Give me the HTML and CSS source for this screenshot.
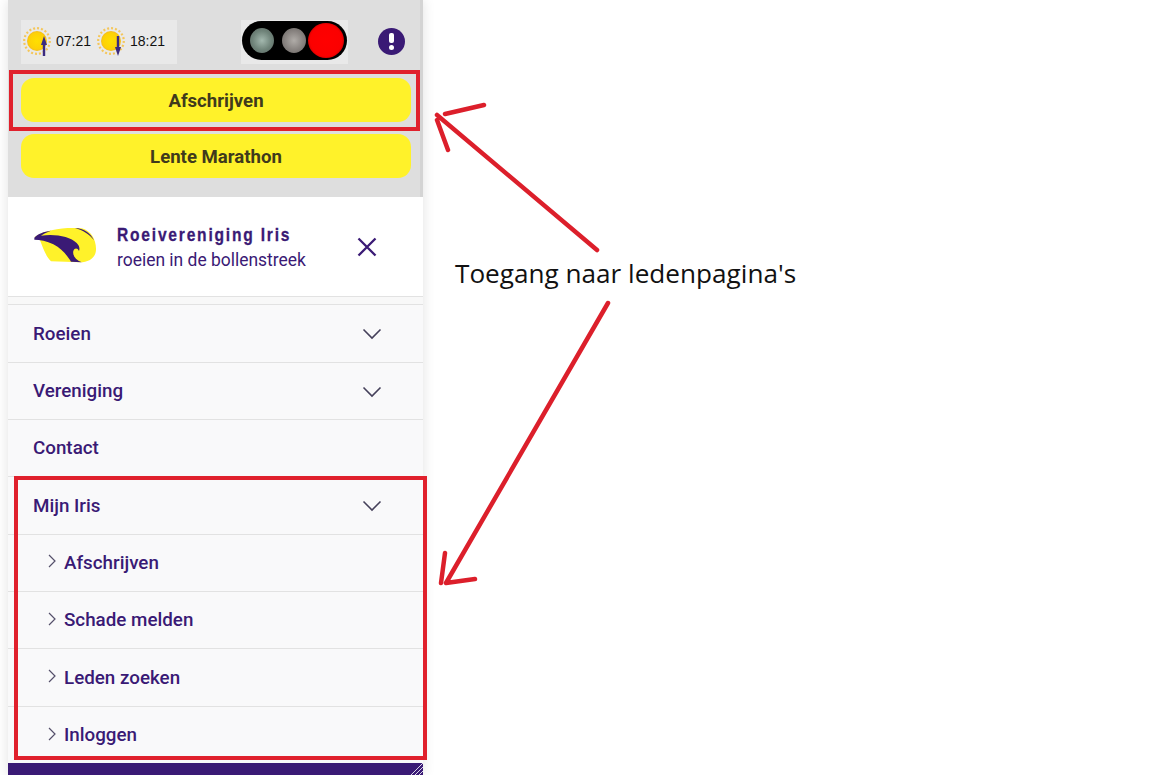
FILE: index.html
```html
<!DOCTYPE html>
<html>

<head>
    <title>Roeivereniging Iris</title>
    <link rel="stylesheet" href="styles.css">
</head>

<body>
    <svg class="defs" width="0" height="0">
        <defs>
            <radialGradient id="sun-fill">
                <stop offset="0" stop-color="#ffdf00" />
                <stop offset="0.8" stop-color="#fdd106" />
                <stop offset="1" stop-color="#f3bb20" />
            </radialGradient>
            <symbol id="sun" viewBox="0 0 28 28">
                <circle cx="14" cy="14" r="12.8" fill="none" stroke="#f4c65a" stroke-width="2.2" stroke-dasharray="2 2" />
                <circle cx="14" cy="14" r="10" fill="url(#sun-fill)" />
            </symbol>
            <symbol id="chevron-down" viewBox="0 0 20 12">
                <path d="M1.5 1.5 10 10 18.5 1.5" fill="none" stroke="#45405a" stroke-width="1.6" />
            </symbol>
            <symbol id="chevron-right" viewBox="0 0 8 14">
                <path d="M1 1 7 7 1 13" fill="none" stroke="#55506a" stroke-width="1.2" />
            </symbol>
        </defs>
    </svg>

    <div class="panel">
        <div class="top-block">
            <div class="status-row">
                <div class="sun-times">
                    <span class="sun-icon">
                        <svg class="sun-svg"><use href="#sun" /></svg>
                        <svg class="sun-arrow" viewBox="0 0 6 20"><path d="M3 0 6 9H4.2V20H1.8V9H0Z" fill="#3b2a80" /></svg>
                    </span>
                    <span class="time">07:21</span>
                    <span class="sun-icon">
                        <svg class="sun-svg"><use href="#sun" /></svg>
                        <svg class="sun-arrow" viewBox="0 0 6 20"><path d="M3 20 6 11H4.2V0H1.8V11H0Z" fill="#3b2a80" /></svg>
                    </span>
                    <span class="time">18:21</span>
                </div>
                <div class="light-box">
                    <div class="traffic-light">
                        <span class="lamp lamp-green"></span>
                        <span class="lamp lamp-grey"></span>
                        <span class="lamp lamp-red"></span>
                    </div>
                </div>
                <div class="alert-icon">
                    <span class="alert-bar"></span>
                    <span class="alert-dot"></span>
                </div>
            </div>
            <a class="yellow-button">Afschrijven</a>
            <a class="yellow-button">Lente Marathon</a>
        </div>

        <div class="brand">
            <svg class="logo" viewBox="0 0 255 165">
                <path d="M28 55C60 30 125 24 170 28C197 34 214 62 213 92C212 116 192 130 165 130L78 127C64 114 55 90 45 64Z" fill="#fff22a" />
                <path d="M150 27C175 27 197 42 207 64C192 45 175 34 150 27Z" fill="#3a1a75" />
                <path d="M28 56C40 44 55 38 78 35C62 41 53 46 48 50C90 44 135 52 155 72C163 80 165 88 162 96C158 86 148 86 145 96C142 110 152 122 170 130L138 128C128 112 112 90 85 76C65 66 45 62 28 62Z" fill="#3a1a75" />
            </svg>
            <div class="brand-text">
                <div class="brand-name">Roeivereniging Iris</div>
                <div class="brand-sub">roeien in de bollenstreek</div>
            </div>
            <svg class="close-icon" viewBox="0 0 20 20">
                <path d="M1.5 1.5 18.5 18.5M18.5 1.5 1.5 18.5" fill="none" stroke="#3a1a75" stroke-width="2.3" />
            </svg>
        </div>

        <div class="brand-gap"></div>

        <ul class="menu">
            <li class="menu-item">Roeien <svg class="chevron"><use href="#chevron-down" /></svg></li>
            <li class="menu-item">Vereniging <svg class="chevron"><use href="#chevron-down" /></svg></li>
            <li class="menu-item">Contact</li>
            <li class="menu-item">Mijn Iris <svg class="chevron"><use href="#chevron-down" /></svg></li>
            <li class="menu-item sub-item"><svg class="sub-chevron"><use href="#chevron-right" /></svg>Afschrijven</li>
            <li class="menu-item sub-item"><svg class="sub-chevron"><use href="#chevron-right" /></svg>Schade melden</li>
            <li class="menu-item sub-item"><svg class="sub-chevron"><use href="#chevron-right" /></svg>Leden zoeken</li>
            <li class="menu-item sub-item"><svg class="sub-chevron"><use href="#chevron-right" /></svg>Inloggen</li>
        </ul>

        <div class="panel-footer">
            <svg class="resize-lines" viewBox="0 0 14 12">
                <path d="M2 12 14 0M6 12 14 4M10 12 14 8" fill="none" stroke="#d8d4e8" stroke-width="1" />
            </svg>
        </div>
    </div>

    <!-- red markup drawn on top of the screenshot -->
    <div class="mark mark-top"></div>
    <div class="mark mark-bottom"></div>
    <svg class="arrows" viewBox="0 0 1152 775">
        <path d="M597 250 437 115M445 114 484 105M437 120 448 150" />
        <path d="M608 303 446 583M446 583 475 579M441 583 445 553" />
    </svg>
    <div class="note">Toegang naar ledenpagina's</div>
</body>

</html>
```

FILE: styles.css
```css
html,
body {
    height: 775px;
    overflow: hidden;
}

body {
    font-family: Roboto, sans-serif;
    margin: 0;
    padding: 0;
    background-color: #fff;
    color: #3a1a75;
}

.defs {
    position: absolute;
}

.panel {
    width: 415px;
    height: 775px;
    margin-left: 8px;
    display: flex;
    flex-direction: column;
    background-color: #f9f9fa;
    box-shadow: 0 0 12px rgba(0, 0, 0, 0.12);
}

.top-block {
    flex: none;
    height: 197px;
    box-sizing: border-box;
    padding: 20px 12px 0 13px;
    background-color: #dedede;
    border-right: 3px solid #d4d4d4;
}

.status-row {
    height: 44px;
    margin-bottom: 14px;
    display: flex;
    align-items: flex-start;
}

.sun-times {
    width: 156px;
    height: 44px;
    padding-left: 2px;
    box-sizing: border-box;
    display: flex;
    align-items: center;
    background-color: #e9e9e9;
    font-family: "Liberation Sans", sans-serif;
    font-size: 14px;
    color: #111;
}

.sun-icon {
    position: relative;
    width: 28px;
    height: 28px;
    margin-top: -2px;
    flex: none;
}

.sun-svg {
    width: 28px;
    height: 28px;
}

.sun-arrow {
    position: absolute;
    left: 18px;
    top: 9px;
    width: 6px;
    height: 20px;
}

.time {
    width: 46px;
    padding-left: 5px;
    box-sizing: border-box;
    margin-top: -2px;
}

.light-box {
    width: 107px;
    height: 44px;
    margin-left: 64px;
    background-color: #e9e9e9;
}

.traffic-light {
    width: 105px;
    height: 39px;
    margin-left: 1px;
    margin-top: 1px;
    border-radius: 20px;
    background-color: #000;
    position: relative;
}

.lamp {
    position: absolute;
    border-radius: 50%;
}

.lamp-green {
    left: 8px;
    top: 7px;
    width: 24px;
    height: 25px;
    background: radial-gradient(circle, #a3b8ae 0, #6f8379 55%, #59645f 100%);
}

.lamp-grey {
    left: 40px;
    top: 7px;
    width: 24px;
    height: 25px;
    background: radial-gradient(circle, #b0aca8 0, #87827f 55%, #66625f 100%);
}

.lamp-red {
    left: 66px;
    top: 2px;
    width: 36px;
    height: 35px;
    background: radial-gradient(circle, #f00 0, #fb0000 62%, #b00000 85%, #600000 100%);
}

.alert-icon {
    width: 27px;
    height: 27px;
    margin-left: 30px;
    margin-top: 8px;
    border-radius: 50%;
    background-color: #3a1a75;
    display: flex;
    flex-direction: column;
    align-items: center;
    justify-content: center;
    gap: 2px;
}

.alert-bar {
    width: 5px;
    height: 10px;
    border-radius: 2px;
    background-color: #fff;
}

.alert-dot {
    width: 5px;
    height: 5px;
    border-radius: 50%;
    background-color: #fff;
}

.yellow-button {
    display: block;
    width: 390px;
    height: 44px;
    margin-bottom: 12px;
    border-radius: 13px;
    background-color: #fff22a;
    color: #403a1c;
    font-weight: 700;
    font-size: 18.6px;
    line-height: 46px;
    text-align: center;
}

.brand {
    flex: none;
    height: 100px;
    box-sizing: border-box;
    padding-left: 26px;
    display: flex;
    align-items: center;
    background-color: #fff;
    border-bottom: 1px solid #e2e2e2;
}

.logo {
    width: 85px;
    height: 55px;
    margin-left: -9px;
    margin-right: 7px;
    flex: none;
}

.brand-text {
    width: 190px;
    padding-top: 4px;
}

.brand-name {
    font-family: "Liberation Sans", sans-serif;
    font-weight: 700;
    font-size: 19px;
    letter-spacing: 2.18px;
    -webkit-text-stroke: 0.3px #3a1a75;
    line-height: 24px;
    white-space: nowrap;
    transform: scaleX(0.82);
    transform-origin: left center;
}

.brand-sub {
    font-size: 17.46px;
    line-height: 27px;
    white-space: nowrap;
}

.close-icon {
    width: 20px;
    height: 20px;
    margin-left: 50px;
    margin-top: 1px;
    flex: none;
}

.brand-gap {
    flex: none;
    height: 7px;
    background-color: #f8f8f8;
    border-bottom: 1px solid #e2e2e2;
}

.menu {
    flex: none;
    list-style: none;
    margin: 0;
    padding: 0.4px 0 0;
}

.menu-item {
    height: 57.35px;
    box-sizing: border-box;
    padding-left: 25px;
    display: flex;
    align-items: center;
    border-bottom: 1px solid #e2e2e2;
    font-size: 18.8px;
    font-weight: 500;
    position: relative;
}

.menu-item:last-child {
    height: 56.6px;
    border-bottom: none;
}

.chevron {
    position: absolute;
    left: 354px;
    top: 23px;
    width: 20px;
    height: 12px;
}

.sub-item {
    padding-left: 40px;
}

.sub-chevron {
    width: 8px;
    height: 14px;
    margin-right: 8px;
    margin-top: -3px;
}

.panel-footer {
    flex: 1;
    min-height: 0;
    overflow: hidden;
    background-color: #3a1a75;
    display: flex;
    justify-content: flex-end;
    align-items: flex-start;
}

.resize-lines {
    width: 14px;
    height: 12px;
}

.mark {
    position: absolute;
    box-sizing: border-box;
    border: 4px solid #e0202c;
}

.mark-top {
    left: 9px;
    top: 70px;
    width: 411px;
    height: 61px;
}

.mark-bottom {
    left: 14px;
    top: 476px;
    width: 413px;
    height: 284px;
}

.arrows {
    position: absolute;
    left: 0;
    top: 0;
    width: 1152px;
    height: 775px;
    fill: none;
    stroke: #dc1f2b;
    stroke-width: 4.5;
    stroke-linecap: round;
}

.note {
    position: absolute;
    left: 455px;
    top: 256px;
    font-family: "Open Sans", sans-serif;
    font-size: 26.15px;
    line-height: 34px;
    color: #111;
    white-space: nowrap;
}
```
